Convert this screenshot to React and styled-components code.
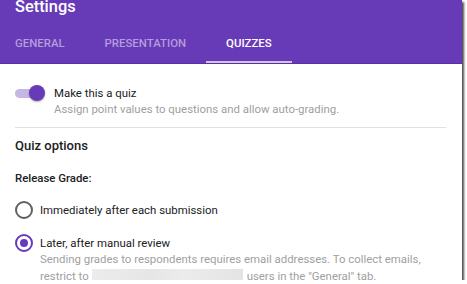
import styled, { createGlobalStyle } from "styled-components"

const GlobalStyle = createGlobalStyle`
    html, body {
        margin: 0;
        padding: 0;
        background: #ffffff;
    }
    body {
        font-family: Roboto, "Liberation Sans", sans-serif;
        -webkit-font-smoothing: antialiased;
    }
`

const Frame = styled.div`
    width: 462px;
    height: 280px;
    overflow: hidden;
    background: #ffffff;
    box-shadow: 2px 2px 2px rgba(0, 0, 0, 0.7);
`

const Header = styled.header`
    background: #673ab7;
    border-bottom: 1px solid #5b2ea8;
    height: 63px;
    display: flex;
    flex-direction: column;
    justify-content: space-between;
`

const Title = styled.h1`
    margin: -3px 0 0;
    padding-left: 15px;
    font-size: 16.4px;
    font-weight: 500;
    line-height: 20px;
    color: #ffffff;
`

const TabList = styled.ul`
    display: flex;
    margin: 0;
    padding: 0;
    list-style: none;
`

const Tab = styled.li`
    padding: 0 20px;
    height: 38px;
    display: flex;
    align-items: center;
    box-sizing: border-box;
    border-bottom: 2px solid ${({ $active }) => ($active ? "#d1c4e9" : "transparent")};
    font-size: 11.4px;
    font-weight: 500;
    text-transform: uppercase;
    color: ${({ $active }) => ($active ? "#ffffff" : "#b39ddb")};
    &:first-child {
        padding-left: 15px;
    }
`

const Body = styled.section`
    padding: 0 10px 0 15px;
`

const ToggleRow = styled.div`
    display: flex;
    align-items: flex-start;
    gap: 10px;
    padding-top: 21px;
`

const Switch = styled.span`
    position: relative;
    width: 29px;
    height: 16px;
    flex: none;
`

const SwitchTrack = styled.span`
    position: absolute;
    left: 0;
    top: 4px;
    width: 26px;
    height: 9px;
    border-radius: 5px;
    background: #c5b6e3;
`

const SwitchThumb = styled.span`
    position: absolute;
    right: -1px;
    top: 0;
    width: 16px;
    height: 16px;
    border-radius: 50%;
    background: #673ab7;
    box-shadow: 0 1px 2px rgba(0, 0, 0, 0.3);
`

const Label = styled.div`
    font-size: 11.4px;
    line-height: 16px;
    color: #202124;
`

const Hint = styled.div`
    font-size: 11.4px;
    line-height: 16px;
    color: #a0a0a0;
`

const Divider = styled.hr`
    border: 0;
    border-top: 1px solid #e0e0e0;
    margin: 10px 6px 0 0;
`

const SectionTitle = styled.h2`
    margin: 9px 0 0;
    font-size: 13px;
    font-weight: 500;
    line-height: 18px;
    color: #202124;
`

const FieldLabel = styled.h3`
    margin: 15px 0 0;
    font-size: 11.4px;
    font-weight: 500;
    line-height: 16px;
    color: #202124;
`

const RadioList = styled.div`
    display: flex;
    flex-direction: column;
    gap: 15px;
    margin-top: 15px;
`

const RadioRow = styled.label`
    display: grid;
    grid-template-columns: 18px 1fr;
    column-gap: 7px;
    align-items: start;
`

const RadioCircle = styled.span`
    width: 18px;
    height: 18px;
    box-sizing: border-box;
    border-radius: 50%;
    border: 2px solid ${({ $checked }) => ($checked ? "#673ab7" : "#616161")};
    display: flex;
    align-items: center;
    justify-content: center;
    &::after {
        content: "";
        display: ${({ $checked }) => ($checked ? "block" : "none")};
        width: 8px;
        height: 8px;
        border-radius: 50%;
        background: #673ab7;
    }
`

const RadioText = styled.div`
    padding-top: 1px;
`

const Description = styled.div`
    font-size: 11.4px;
    line-height: 17px;
    color: #a0a0a0;
`

const Redacted = styled.span`
    display: inline-block;
    width: 151px;
    height: 13px;
    margin: 0 4px 0 3px;
    vertical-align: -2px;
    background: linear-gradient(90deg, #ececec, #e6e6e6 40%, #ececec 60%, #e4e4e4);
`

export default function App() {
    return (
        <>
            <GlobalStyle />
            <Frame>
                <Header>
                    <Title>Settings</Title>
                    <TabList>
                        <Tab>General</Tab>
                        <Tab>Presentation</Tab>
                        <Tab $active>Quizzes</Tab>
                    </TabList>
                </Header>
                <Body>
                    <ToggleRow>
                        <Switch>
                            <SwitchTrack />
                            <SwitchThumb />
                        </Switch>
                        <div>
                            <Label>Make this a quiz</Label>
                            <Hint>Assign point values to questions and allow auto-grading.</Hint>
                        </div>
                    </ToggleRow>
                    <Divider />
                    <SectionTitle>Quiz options</SectionTitle>
                    <FieldLabel>Release Grade:</FieldLabel>
                    <RadioList>
                        <RadioRow>
                            <RadioCircle />
                            <RadioText>
                                <Label>Immediately after each submission</Label>
                            </RadioText>
                        </RadioRow>
                        <RadioRow>
                            <RadioCircle $checked />
                            <RadioText>
                                <Label>Later, after manual review</Label>
                                <Description>
                                    Sending grades to respondents requires email addresses. To collect emails,
                                    restrict to<Redacted />users in the "General" tab.
                                </Description>
                            </RadioText>
                        </RadioRow>
                    </RadioList>
                </Body>
            </Frame>
        </>
    )
}
